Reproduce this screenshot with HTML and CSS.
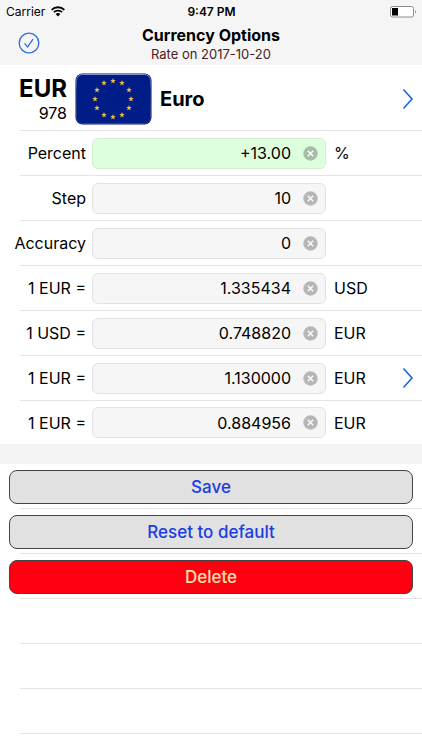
FILE: index.html
```html
<!DOCTYPE html>
<html lang="en">

<head>
  <meta charset="UTF-8">
  <meta name="viewport" content="width=device-width, initial-scale=1.0">
  <title>Currency Options</title>
  <link rel="stylesheet" href="styles.css">
</head>

<body>
  <!-- Shared icons -->
  <svg class="defs" width="0" height="0" aria-hidden="true">
    <symbol id="chevron" viewBox="0 0 12 22">
      <path d="M1.5 1.5 L10 11 L1.5 20.5" fill="none" stroke="#1a66e0" stroke-width="1.6" />
    </symbol>
    <symbol id="clear" viewBox="0 0 15 15">
      <circle cx="7.5" cy="7.5" r="7.2" fill="#000" fill-opacity="0.26" />
      <path d="M4.8 4.8 L10.2 10.2 M10.2 4.8 L4.8 10.2" stroke="#fff" stroke-width="1.3" />
    </symbol>
    <symbol id="star" viewBox="-10 -10 20 20">
      <path d="M0 -10 L2.4 -3.1 L9.5 -3.1 L3.8 1.2 L5.9 8.1 L0 4 L-5.9 8.1 L-3.8 1.2 L-9.5 -3.1 L-2.4 -3.1 Z" fill="#f0c040" />
    </symbol>
  </svg>

  <header class="top">
    <div class="status-bar">
      <div class="carrier">
        <span>Carrier</span>
        <svg width="14" height="11" viewBox="0 0 14 11">
          <path d="M0.7 3.9 A9.1 9.1 0 0 1 13.3 3.9" fill="none" stroke="#000" stroke-width="2" />
          <path d="M2.9 6.2 A6 6 0 0 1 11.1 6.2" fill="none" stroke="#000" stroke-width="1.8" />
          <path d="M7 10.6 L4.6 8.1 A3.5 3.5 0 0 1 9.4 8.1 Z" fill="#000" />
        </svg>
      </div>
      <div class="time">9:47 PM</div>
      <svg class="battery" width="27" height="12" viewBox="0 0 27 12">
        <rect x="0.5" y="0.5" width="23" height="10.5" rx="2" fill="#fff" stroke="#8c8c8c" />
        <rect x="2" y="2" width="6" height="7.5" fill="#000" />
        <path d="M25 4 Q27 5.8 25 7.6 Z" fill="#8c8c8c" />
      </svg>
    </div>
    <div class="nav-bar">
      <button class="done" type="button" aria-label="Done">
        <svg width="22" height="22" viewBox="0 0 22 22" fill="none" stroke="#2a6be0">
          <circle cx="11" cy="11" r="9.8" stroke-width="1.3" />
          <path d="M6.6 11.4 L9.6 15 L15 7.2" stroke-width="1.3" />
        </svg>
      </button>
      <div class="titles">
        <h1>Currency Options</h1>
        <p>Rate on 2017-10-20</p>
      </div>
    </div>
  </header>

  <main>
    <section class="options">
      <div class="row currency">
        <div class="codes">
          <strong>EUR</strong>
          <span>978</span>
        </div>
        <svg class="flag" width="77" height="52" viewBox="0 0 77 52">
          <defs>
            <linearGradient id="edge" x1="0" y1="0" x2="0" y2="1">
              <stop offset="0" stop-color="#8493cc" />
              <stop offset="0.3" stop-color="#1a3288" />
              <stop offset="1" stop-color="#33457f" />
            </linearGradient>
          </defs>
          <rect x="0.5" y="0.5" width="76" height="51" rx="7" fill="#00106e" />
          <rect x="1.5" y="1.5" width="74" height="49" rx="6" fill="#001c87" stroke="url(#edge)" />
          <use href="#star" x="35" y="5" width="6" height="6" />
          <use href="#star" x="44" y="7" width="6" height="6" />
          <use href="#star" x="51" y="14" width="6" height="6" />
          <use href="#star" x="53" y="23" width="6" height="6" />
          <use href="#star" x="51" y="32" width="6" height="6" />
          <use href="#star" x="44" y="39" width="6" height="6" />
          <use href="#star" x="35" y="41" width="6" height="6" />
          <use href="#star" x="26" y="39" width="6" height="6" />
          <use href="#star" x="19" y="32" width="6" height="6" />
          <use href="#star" x="17" y="23" width="6" height="6" />
          <use href="#star" x="19" y="14" width="6" height="6" />
          <use href="#star" x="26" y="7" width="6" height="6" />
        </svg>
        <h2>Euro</h2>
        <a class="more" href="#currency" aria-label="Choose currency"><svg width="12" height="22"><use href="#chevron" /></svg></a>
      </div>

      <div class="row">
        <label for="percent">Percent</label>
        <div class="field changed">
          <input type="text" id="percent" value="+13.00">
          <button type="button" aria-label="Clear"><svg width="15" height="15"><use href="#clear" /></svg></button>
        </div>
        <div class="unit">%</div>
      </div>
      <div class="row">
        <label for="step">Step</label>
        <div class="field">
          <input type="text" id="step" value="10">
          <button type="button" aria-label="Clear"><svg width="15" height="15"><use href="#clear" /></svg></button>
        </div>
        <div class="unit"></div>
      </div>
      <div class="row">
        <label for="accuracy">Accuracy</label>
        <div class="field">
          <input type="text" id="accuracy" value="0">
          <button type="button" aria-label="Clear"><svg width="15" height="15"><use href="#clear" /></svg></button>
        </div>
        <div class="unit"></div>
      </div>
      <div class="row">
        <label for="eurUsd">1 EUR =</label>
        <div class="field">
          <input type="text" id="eurUsd" value="1.335434">
          <button type="button" aria-label="Clear"><svg width="15" height="15"><use href="#clear" /></svg></button>
        </div>
        <div class="unit">USD</div>
      </div>
      <div class="row">
        <label for="usdEur">1 USD =</label>
        <div class="field">
          <input type="text" id="usdEur" value="0.748820">
          <button type="button" aria-label="Clear"><svg width="15" height="15"><use href="#clear" /></svg></button>
        </div>
        <div class="unit">EUR</div>
      </div>
      <div class="row">
        <label for="eurEur">1 EUR =</label>
        <div class="field">
          <input type="text" id="eurEur" value="1.130000">
          <button type="button" aria-label="Clear"><svg width="15" height="15"><use href="#clear" /></svg></button>
        </div>
        <div class="unit">EUR
          <a class="more" href="#base" aria-label="Choose base currency"><svg width="12" height="22"><use href="#chevron" /></svg></a>
        </div>
      </div>
      <div class="row">
        <label for="eurBack">1 EUR =</label>
        <div class="field">
          <input type="text" id="eurBack" value="0.884956">
          <button type="button" aria-label="Clear"><svg width="15" height="15"><use href="#clear" /></svg></button>
        </div>
        <div class="unit">EUR</div>
      </div>
    </section>

    <section class="actions">
      <div class="row"><button type="button">Save</button></div>
      <div class="row"><button type="button">Reset to default</button></div>
      <div class="row"><button type="button" class="delete">Delete</button></div>
      <div class="row"></div>
      <div class="row"></div>
      <div class="row"></div>
    </section>
  </main>
</body>

</html>
```
FILE: styles.css
```css
* {
  box-sizing: border-box;
}

body {
  margin: 0;
  font-family: Inter, "Liberation Sans", sans-serif;
  font-size: 16px;
  line-height: 20px;
  background-color: #ffffff;
  color: #000000;
}

h1,
h2,
p {
  margin: 0;
}

svg {
  display: block;
}

button {
  font-family: inherit;
  cursor: pointer;
}

.defs {
  position: absolute;
}

/* Status bar and title */
.top {
  padding-bottom: 3px;
  background-color: #f5f5f5;
}

.status-bar {
  display: grid;
  grid-template-columns: 1fr auto 1fr;
  align-items: center;
  height: 23px;
  padding: 0 5px 0 6px;
  font-size: 12px;
}

.carrier {
  display: flex;
  align-items: center;
  gap: 6px;
}

.time {
  font-weight: 600;
}

.battery {
  justify-self: end;
}

.nav-bar {
  display: grid;
  grid-template-columns: 40px 1fr 40px;
  align-items: center;
}

.done {
  justify-self: end;
  padding: 0;
  border: none;
  background: none;
}

.titles {
  text-align: center;
}

.titles h1 {
  font-size: 16px;
  font-weight: 700;
  line-height: 24px;
}

.titles p {
  font-size: 13px;
  line-height: 15px;
  color: #4a1c1c;
}

/* Rows */
.row {
  display: flex;
  align-items: center;
  min-height: 45px;
  border-bottom: 1px solid;
  border-image: linear-gradient(to right, transparent 21px, #e4e4e6 21px) 1;
}

.options .row:last-child {
  min-height: 43px;
  border-bottom: none;
}

.currency {
  min-height: 66px;
  padding-top: 2px;
}

.codes {
  display: flex;
  flex-direction: column;
  width: 67px;
  text-align: right;
}

.codes strong {
  font-size: 24px;
  line-height: 28px;
}

.flag {
  margin: 0 8px;
}

.currency h2 {
  flex: 1;
  font-size: 20px;
}

.more {
  margin-left: auto;
  margin-right: 8px;
}

.row label {
  width: 86px;
  margin-right: 6px;
  text-align: right;
  white-space: nowrap;
}

.field {
  display: flex;
  flex: 1;
  align-items: center;
  min-width: 0;
  height: 31px;
  border: 1px solid #e2e2e2;
  border-radius: 6px;
  background-color: #f6f6f6;
}

.field.changed {
  background-color: #deffde;
  border-color: #d5ecd5;
}

.field input {
  flex: 1;
  min-width: 0;
  padding: 0;
  border: none;
  outline: none;
  background: none;
  font-family: inherit;
  font-size: 16px;
  text-align: right;
}

.field button {
  margin: 0 7px 0 12px;
  padding: 0;
  border: none;
  background: none;
}

.unit {
  display: flex;
  align-items: center;
  width: 96px;
  padding-left: 8px;
}

/* Buttons */
.actions {
  border-top: 20px solid #f4f4f4;
}

.actions .row {
  padding: 1px 9px 0;
}

.actions button {
  flex: 1;
  height: 34px;
  padding: 0;
  border: 1px solid #444444;
  border-radius: 8px;
  background-color: #e1e1e1;
  font-size: 17px;
  font-weight: 500;
  color: #1a3ee0;
}

.actions .delete {
  background-color: #ff0010;
  color: #ffe0a8;
}
```
